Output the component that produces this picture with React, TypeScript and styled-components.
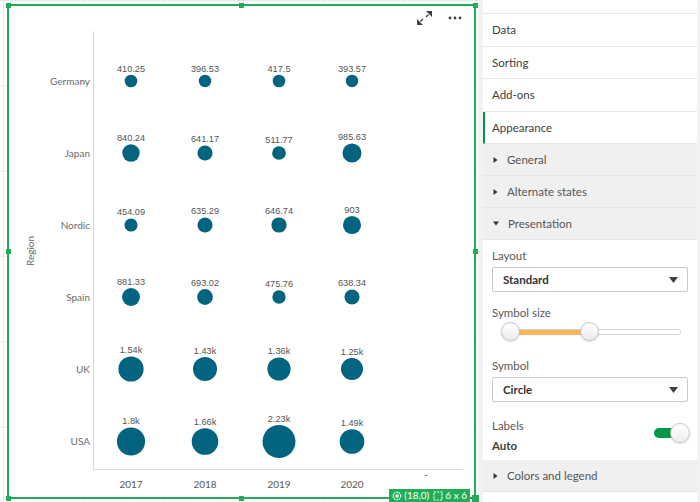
import React from 'react';
import styled, { createGlobalStyle } from 'styled-components';

const GREEN = '#21ad57';
const BUBBLE = '#03647f';
const UI_FONT = 'Lato, "Noto Sans", sans-serif';

const GlobalStyle = createGlobalStyle`
  html, body {
    margin: 0;
    padding: 0;
    background: #fff;
  }
  body {
    font-family: ${UI_FONT};
  }
  #root {
    width: 700px;
    height: 502px;
    overflow: hidden;
  }
`;

const rows = ['Germany', 'Japan', 'Nordic', 'Spain', 'UK', 'USA'];
const rowY = [81, 153, 225, 297, 369, 441.5];
const years = ['2017', '2018', '2019', '2020', '-'];
const colX = [131, 205, 279, 352, 426];

const values: number[][] = [
  [410.25, 396.53, 417.5, 393.57],
  [840.24, 641.17, 511.77, 985.63],
  [454.09, 635.29, 646.74, 903],
  [881.33, 693.02, 475.76, 638.34],
  [1540, 1430, 1360, 1250],
  [1800, 1660, 2230, 1490],
];

function formatValue(v: number) {
  if (v >= 1000) {
    return `${ +(v / 1000).toFixed(2) }k`;
  }
  return `${ v }`;
}

function radius(v: number) {
  return 4 + 0.0056 * v;
}

const Page = styled.div`
  display: flex;
  width: 700px;
  height: 502px;
  overflow: hidden;
`;

const Canvas = styled.div`
  width: 478px;
  height: 502px;
  flex-shrink: 0;
  box-sizing: border-box;
  padding: 4px 2px 3px 7px;
  background-color: #fff;
  background-image:
    linear-gradient(to right, #e8e8e8 1px, transparent 1px),
    linear-gradient(to bottom, #e8e8e8 1px, transparent 1px);
  background-size: 80px 85.3px;
  background-position: 3px 0;
`;

const Frame = styled.div`
  position: relative;
  height: 100%;
  box-sizing: border-box;
  border: 2px solid ${ GREEN };
  background: #fff;
`;

const ChartSvg = styled.svg`
  display: block;
  width: 100%;
  height: 100%;
`;

const RowLabel = styled.text`
  font-family: ${ UI_FONT };
  font-size: 10px;
  fill: #6b6b6b;
`;

const YearLabel = styled.text`
  font-family: ${ UI_FONT };
  font-size: 10px;
  fill: #595959;
`;

const ValueLabel = styled.text`
  font-family: "Liberation Sans", Arial, sans-serif;
  font-size: 9.2px;
  fill: #555;
`;

type HandleProps = {
  $h: 'left' | 'mid' | 'right'
  $v: 'top' | 'mid' | 'bottom'
  $size?: number
}
const Handle = styled.span<HandleProps>`
  position: absolute;
  width: ${ ({ $size }) => $size || 5 }px;
  height: ${ ({ $size }) => $size || 5 }px;
  background: ${ GREEN };
  left: ${ ({ $h, $size }) => $h === 'left' ? `-${ ($size || 5) / 2 + 1 }px` : $h === 'mid' ? `calc(50% - ${ ($size || 5) / 2 }px)` : 'auto' };
  right: ${ ({ $h, $size }) => $h === 'right' ? `-${ ($size || 5) / 2 + 1 }px` : 'auto' };
  top: ${ ({ $v, $size }) => $v === 'top' ? `-${ ($size || 5) / 2 + 1 }px` : $v === 'mid' ? `calc(50% - ${ ($size || 5) / 2 }px)` : 'auto' };
  bottom: ${ ({ $v, $size }) => $v === 'bottom' ? `-${ ($size || 5) / 2 + 1 }px` : 'auto' };
`;

const Toolbar = styled.div`
  position: absolute;
  top: 5px;
  right: 12px;
  display: flex;
  align-items: center;
  gap: 16px;
`;

const IconButton = styled.span`
  display: flex;
  align-items: center;
  justify-content: center;
  color: #404040;
`;

const Badge = styled.div`
  position: absolute;
  right: 4px;
  bottom: -5px;
  height: 13px;
  display: flex;
  align-items: center;
  gap: 2px;
  padding: 0 3px;
  background: ${ GREEN };
  color: #fff;
  font-family: ${ UI_FONT };
  font-size: 10px;
  line-height: 13px;
`;

const Panel = styled.aside`
  flex: 1;
  display: flex;
  flex-direction: column;
  padding: 0 3px 0 5px;
  background: #f2f2f2;
  font-family: ${ UI_FONT };
  font-size: 11.5px;
  color: #404040;
`;

const PanelTop = styled.div`
  height: 13px;
  flex-shrink: 0;
  background: #fff;
  border-bottom: 1px solid #e6e6e6;
`;

const NavItem = styled.div<{ $active?: boolean }>`
  height: 32.5px;
  flex-shrink: 0;
  box-sizing: border-box;
  display: flex;
  align-items: center;
  background: #fff;
  border-bottom: 1px solid #e6e6e6;
  border-left: ${ ({ $active }) => $active ? '2px solid #009845' : 'none' };
  padding-left: ${ ({ $active }) => $active ? 7 : 9 }px;
`;

const SectionHeader = styled.div`
  height: 32px;
  flex-shrink: 0;
  box-sizing: border-box;
  display: flex;
  align-items: center;
  gap: 9px;
  padding-left: 10px;
  background: #f0f0f0;
  border-bottom: 1px solid #e6e6e6;
  color: #555;
`;

const Content = styled.div`
  flex-shrink: 0;
  display: flex;
  flex-direction: column;
  background: #fff;
  padding: 8px 9px 6px 9px;
`;

const FieldLabel = styled.div<{ $gap?: number }>`
  line-height: 16px;
  margin-top: ${ ({ $gap }) => $gap || 0 }px;
  color: #595959;
`;

const Select = styled.div`
  height: 25px;
  box-sizing: border-box;
  margin-top: 3px;
  display: flex;
  align-items: center;
  justify-content: space-between;
  padding: 0 9px 0 10px;
  border: 1px solid #c9c9c9;
  border-radius: 2px;
  background: #fff;
  font-weight: bold;
  color: #333;
`;

const Slider = styled.div`
  position: relative;
  height: 20px;
  margin: 1px 0 0 10px;
  width: 179px;
`;

const Track = styled.div`
  position: absolute;
  left: 0;
  right: 0;
  top: 7px;
  height: 6px;
  box-sizing: border-box;
  border: 1px solid #d2d2d2;
  border-radius: 3px;
  background: #fff;
`;

const TrackFill = styled.div`
  position: absolute;
  top: 8px;
  height: 5px;
  background: #fbb65c;
`;

const Knob = styled.span`
  position: absolute;
  top: 0;
  width: 19px;
  height: 19px;
  margin-left: -10px;
  box-sizing: border-box;
  border: 1px solid #c4c4c4;
  border-radius: 50%;
  background: linear-gradient(#fff, #ececec);
  box-shadow: 0 1px 2px rgba(0, 0, 0, 0.15);
`;

const ToggleRow = styled.div`
  display: flex;
  justify-content: space-between;
  align-items: flex-start;
  margin-top: 16px;
`;

const Stack = styled.div`
  display: flex;
  flex-direction: column;
  gap: 4px;
  line-height: 16px;
`;

const Strong = styled.span`
  font-weight: bold;
  color: #404040;
`;

const Toggle = styled.div`
  position: relative;
  width: 36px;
  height: 20px;
  margin: 5px -2px 0 0;
`;

const ToggleTrack = styled.div`
  position: absolute;
  left: 0;
  right: 8px;
  top: 5px;
  height: 10px;
  border-radius: 5px;
  background: #009845;
`;

const ToggleKnob = styled.span`
  position: absolute;
  right: 0;
  top: 0;
  width: 20px;
  height: 20px;
  box-sizing: border-box;
  border: 1px solid #c8c8c8;
  border-radius: 50%;
  background: linear-gradient(#fff, #efefef);
  box-shadow: 0 1px 2px rgba(0, 0, 0, 0.15);
`;

function Caret({ open }: { open?: boolean }) {
  return open ? (
    <svg width="6" height="5" viewBox="0 0 6 5"><path d="M0 0.5 H6 L3 4.5 Z" fill="#333" /></svg>
  ) : (
    <svg width="5" height="6" viewBox="0 0 5 6"><path d="M0.5 0 V6 L4.5 3 Z" fill="#333" /></svg>
  );
}

function SelectCaret() {
  return (
    <svg width="9" height="6" viewBox="0 0 9 6"><path d="M0 0 H9 L4.5 6 Z" fill="#404040" /></svg>
  );
}

function Chart() {
  return (
    <ChartSvg viewBox="9 6 465 491" preserveAspectRatio="none">
      <line x1="93.5" y1="31" x2="93.5" y2="469.5" stroke="#d9d9d9" />
      <line x1="93.5" y1="469.5" x2="463" y2="469.5" stroke="#d9d9d9" />
      <RowLabel x="0" y="0" textAnchor="middle" transform="translate(33.5 251) rotate(-90)">Region</RowLabel>
      { rows.map((r, i) => (
        <RowLabel key={ r } x="90" y={ rowY[i] + 3.5 } textAnchor="end">{ r }</RowLabel>
      )) }
      { years.map((y, i) => (
        <YearLabel key={ y } x={ colX[i] } y={ y === '-' ? 478 : 488 } textAnchor="middle">{ y }</YearLabel>
      )) }
      { values.map((row, ri) => row.map((v, ci) => {
        const r = radius(v);
        return (
          <g key={ `${ ri }-${ ci }` }>
            <circle cx={ colX[ci] } cy={ rowY[ri] } r={ r } fill={ BUBBLE } />
            <ValueLabel x={ colX[ci] } y={ rowY[ri] - r - 3 } textAnchor="middle">{ formatValue(v) }</ValueLabel>
          </g>
        );
      })) }
    </ChartSvg>
  );
}

export default function App() {
  return (
    <>
      <GlobalStyle />
      <Page>
        <Canvas>
          <Frame>
            <Chart />
            <Toolbar>
              <IconButton>
                <svg width="15" height="14" viewBox="0 0 15 14">
                  <path d="M14.5 0.5 H10.5 L14.5 4.5 Z M11.5 3.5 L9 6" fill="#404040" stroke="#404040" strokeWidth="1.4" />
                  <path d="M0.5 13.5 H4.5 L0.5 9.5 Z M3.5 10.5 L6 8" fill="#404040" stroke="#404040" strokeWidth="1.4" />
                </svg>
              </IconButton>
              <IconButton>
                <svg width="14" height="4" viewBox="0 0 14 4">
                  <circle cx="2" cy="2" r="1.4" fill="#404040" />
                  <circle cx="7" cy="2" r="1.4" fill="#404040" />
                  <circle cx="12" cy="2" r="1.4" fill="#404040" />
                </svg>
              </IconButton>
            </Toolbar>
            <Handle $h="left" $v="top" />
            <Handle $h="mid" $v="top" />
            <Handle $h="right" $v="top" />
            <Handle $h="left" $v="mid" />
            <Handle $h="right" $v="mid" />
            <Handle $h="left" $v="bottom" />
            <Handle $h="mid" $v="bottom" />
            <Handle $h="right" $v="bottom" $size={ 7 } />
            <Badge>
              <svg width="10" height="10" viewBox="0 0 10 10">
                <circle cx="5" cy="5" r="3.8" fill="none" stroke="#fff" strokeWidth="1.2" strokeDasharray="1.6 0.8" />
                <circle cx="5" cy="5" r="1.8" fill="#fff" />
              </svg>
              <span>(18,0)</span>
              <svg width="10" height="10" viewBox="0 0 10 10" style={{ marginLeft: 2 }}>
                <rect x="1" y="1" width="8" height="8" fill="none" stroke="#fff" strokeWidth="1.2" strokeDasharray="2 1.2" />
              </svg>
              <span>6 x 6</span>
            </Badge>
          </Frame>
        </Canvas>
        <Panel>
          <PanelTop />
          <NavItem>Data</NavItem>
          <NavItem>Sorting</NavItem>
          <NavItem>Add-ons</NavItem>
          <NavItem $active>Appearance</NavItem>
          <SectionHeader><Caret />General</SectionHeader>
          <SectionHeader><Caret />Alternate states</SectionHeader>
          <SectionHeader><Caret open />Presentation</SectionHeader>
          <Content>
            <FieldLabel>Layout</FieldLabel>
            <Select>Standard<SelectCaret /></Select>
            <FieldLabel $gap={ 13 }>Symbol size</FieldLabel>
            <Slider>
              <Track />
              <TrackFill style={{ left: 9, width: 79 }} />
              <Knob style={{ left: 9 }} />
              <Knob style={{ left: 88 }} />
            </Slider>
            <FieldLabel $gap={ 16 }>Symbol</FieldLabel>
            <Select>Circle<SelectCaret /></Select>
            <ToggleRow>
              <Stack>
                <FieldLabel>Labels</FieldLabel>
                <Strong>Auto</Strong>
              </Stack>
              <Toggle>
                <ToggleTrack />
                <ToggleKnob />
              </Toggle>
            </ToggleRow>
          </Content>
          <SectionHeader><Caret />Colors and legend</SectionHeader>
          <NavItem />
        </Panel>
      </Page>
    </>
  );
}
